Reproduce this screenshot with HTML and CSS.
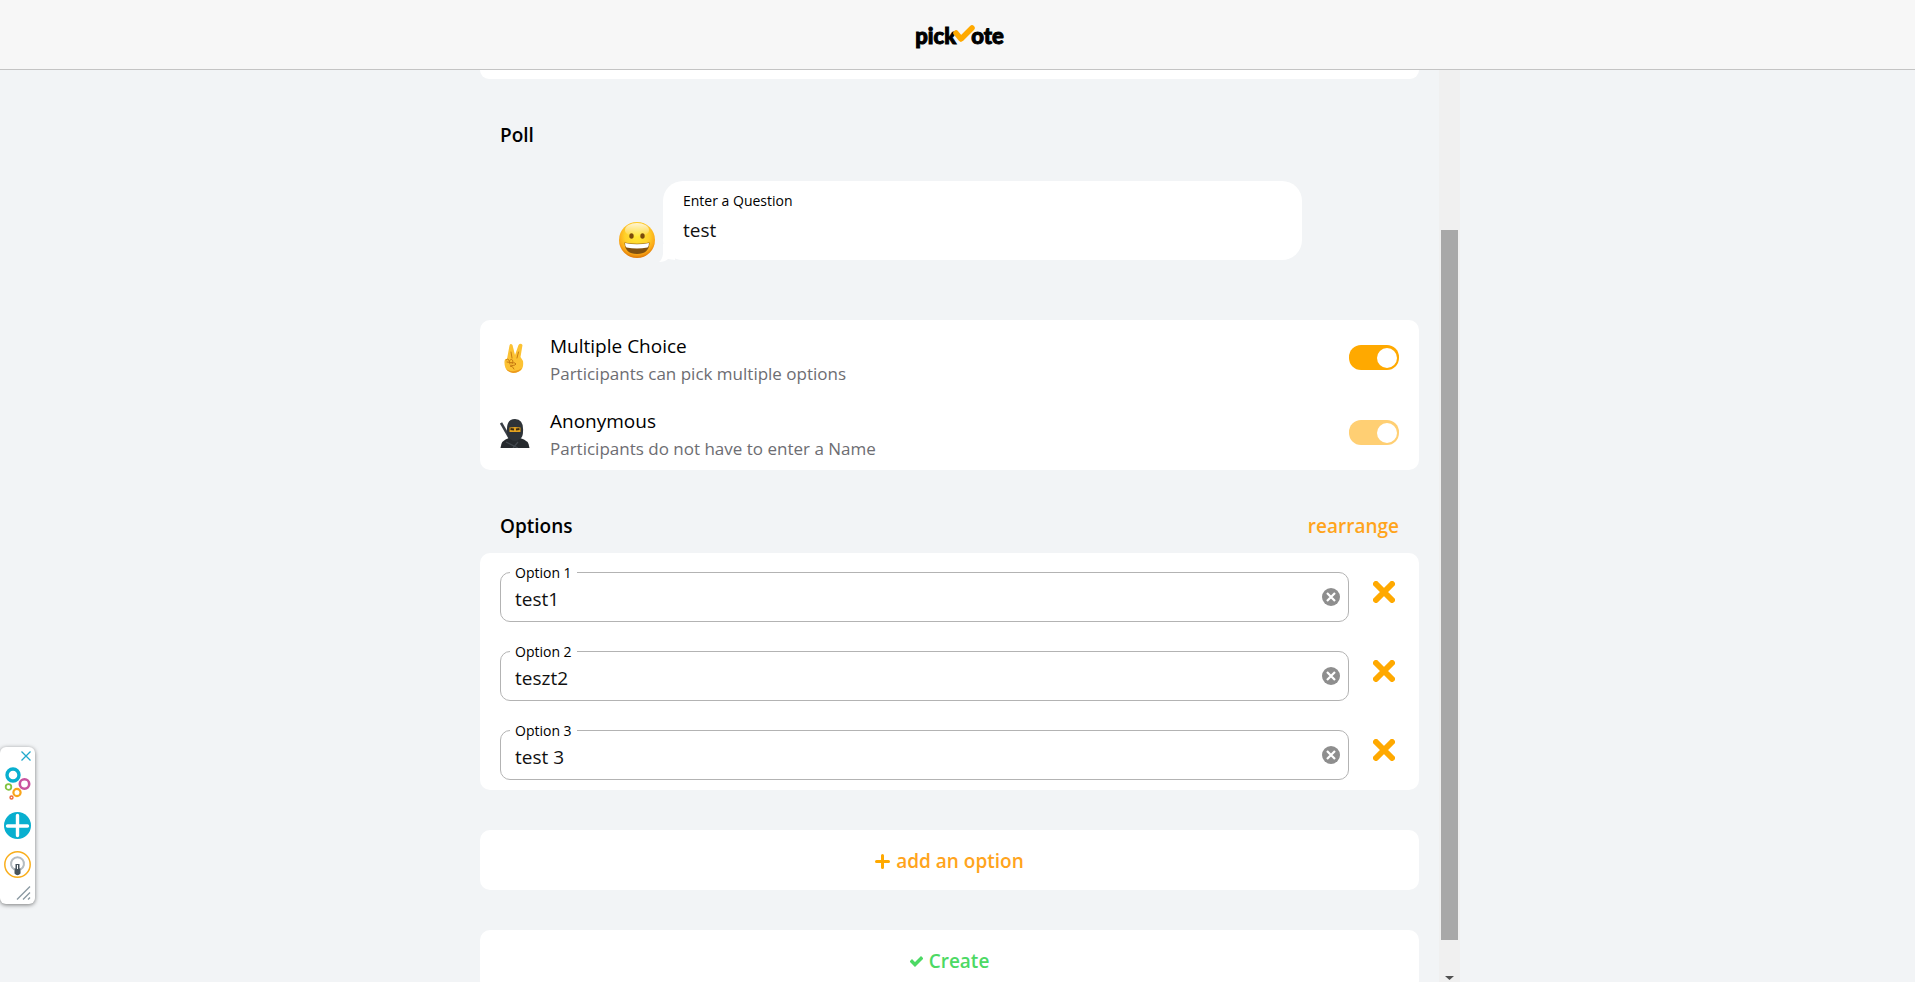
FILE: index.html
```html
<!DOCTYPE html>
<html lang="en">
<head>
    <meta charset="UTF-8">
    <meta name="viewport" content="width=device-width, initial-scale=1.0">
    <title>pickvote</title>
    <link rel="stylesheet" href="styles.css">
</head>
<body>
    <svg class="defs" width="0" height="0" aria-hidden="true">
        <symbol id="cross" viewBox="0 0 22 22">
            <path d="M3 3L19 19M19 3L3 19" fill="none" stroke="#ffa900" stroke-width="6" stroke-linecap="round"/>
        </symbol>
        <symbol id="clear" viewBox="0 0 18 18">
            <circle cx="9" cy="9" r="9" fill="#8e8e8e"/>
            <path d="M5 5L13 13M13 5L5 13" stroke="#fff" stroke-width="2.2"/>
        </symbol>
    </svg>

    <header>
        <a class="logo" href="#">
            <span>pick</span>
            <svg class="logo-check" width="22" height="18" viewBox="0 0 22 18">
                <path d="M3 8L8 14L19 3" fill="none" stroke="#ffa900" stroke-width="5.5" stroke-linecap="round" stroke-linejoin="round"/>
            </svg>
            <span>ote</span>
        </a>
    </header>

    <main>
        <form class="content">
            <div class="card card-end"></div>

            <h2 class="poll-title">Poll</h2>

            <div class="question">
                <svg width="36" height="36" viewBox="0 0 36 36">
                    <defs>
                        <radialGradient id="face" cx="50%" cy="38%" r="62%">
                            <stop offset="0" stop-color="#ffe935"/>
                            <stop offset="0.55" stop-color="#ffd02a"/>
                            <stop offset="0.82" stop-color="#fba918"/>
                            <stop offset="1" stop-color="#de7605"/>
                        </radialGradient>
                        <linearGradient id="shine" x1="0" y1="0" x2="0" y2="1">
                            <stop offset="0" stop-color="#fff" stop-opacity="0.8"/>
                            <stop offset="1" stop-color="#fff" stop-opacity="0"/>
                        </linearGradient>
                    </defs>
                    <circle cx="18" cy="18" r="18" fill="url(#face)"/>
                    <ellipse cx="18" cy="8" rx="12" ry="7" fill="url(#shine)"/>
                    <ellipse cx="12.5" cy="14" rx="2.2" ry="2.7" fill="#7a4a0c"/>
                    <ellipse cx="23.5" cy="14" rx="2.2" ry="2.7" fill="#7a4a0c"/>
                    <path d="M5.500 20.500Q18 23 30.500 20.500Q30 32 18 32Q6 32 5.500 20.500Z" fill="#80500f"/>
                    <path d="M6 21Q18 23.500 30 21Q30 24.500 28.500 25.500Q18 27.500 7.500 25.500Q6 24.500 6 21Z" fill="#fff"/>
                </svg>
                <div class="bubble">
                    <label for="question">Enter a Question</label>
                    <input type="text" id="question" value="test">
                </div>
            </div>

            <div class="card settings">
                <div class="setting">
                    <svg class="emoji" width="30" height="30" viewBox="0 0 30 30">
                        <path d="M7 16L9.500 2.500Q10.500 0 12.500 2L15 12L18.500 2Q20.500-0.500 22.500 2L20.500 14L23 18Q24 25 20 28Q14 31 8 28Q4 25 4.500 18Q5 15 7 16Z" fill="#fcc233"/>
                        <path d="M12 15L11 9M17 15L18.500 9M6 17Q7 15 9 17L10 21M10 17Q12 15 13 18L12 21M7 19L15 20Q17 21 15 22L10 23Q13 23 14 26" fill="none" stroke="#c87c12" stroke-width="1" stroke-linecap="round"/>
                        <path d="M6 26Q14 31 22 25Q19 30 13 30Q8 29 6 26Z" fill="#ec9a1d"/>
                    </svg>
                    <label for="multiple">
                        <span class="name">Multiple Choice</span>
                        <span class="hint">Participants can pick multiple options</span>
                    </label>
                    <input class="toggle" type="checkbox" id="multiple" checked>
                </div>
                <div class="setting">
                    <svg class="emoji" width="30" height="30" viewBox="0 0 30 30">
                        <path d="M1 5L12 24" stroke="#3a3f46" stroke-width="2.600"/>
                        <path d="M0.500 30Q1 22 9 20H20Q29 22 29.500 30Z" fill="#262a2e"/>
                        <path d="M7 14Q6 1 15 1Q24 1 23 14Q23 19 20 21Q15 25 10 21Q7 19 7 14Z" fill="#2e3338"/>
                        <path d="M9.500 9.500Q15 8.500 20.500 9.500V14H9.500Z" fill="#e3a21f"/>
                        <path d="M10.500 11L14 11.500M16 11.500L19.500 11" stroke="#3b2a10" stroke-width="1.800"/>
                        <path d="M6 24L18 30M18 24L13 30" stroke="#43494f" stroke-width="1.200"/>
                    </svg>
                    <label for="anonymous">
                        <span class="name">Anonymous</span>
                        <span class="hint">Participants do not have to enter a Name</span>
                    </label>
                    <input class="toggle" type="checkbox" id="anonymous" checked disabled>
                </div>
            </div>

            <div class="options-head">
                <h2>Options</h2>
                <button type="button">rearrange</button>
            </div>

            <div class="card options">
                <div class="option">
                    <fieldset>
                        <legend><label for="option1">Option 1</label></legend>
                        <input type="text" id="option1" value="test1">
                        <button type="button" aria-label="Clear"><svg width="18" height="18"><use href="#clear"/></svg></button>
                    </fieldset>
                    <button class="remove" type="button" aria-label="Remove"><svg width="22" height="22"><use href="#cross"/></svg></button>
                </div>
                <div class="option">
                    <fieldset>
                        <legend><label for="option2">Option 2</label></legend>
                        <input type="text" id="option2" value="teszt2">
                        <button type="button" aria-label="Clear"><svg width="18" height="18"><use href="#clear"/></svg></button>
                    </fieldset>
                    <button class="remove" type="button" aria-label="Remove"><svg width="22" height="22"><use href="#cross"/></svg></button>
                </div>
                <div class="option">
                    <fieldset>
                        <legend><label for="option3">Option 3</label></legend>
                        <input type="text" id="option3" value="test 3">
                        <button type="button" aria-label="Clear"><svg width="18" height="18"><use href="#clear"/></svg></button>
                    </fieldset>
                    <button class="remove" type="button" aria-label="Remove"><svg width="22" height="22"><use href="#cross"/></svg></button>
                </div>
            </div>

            <button class="card action" type="button">
                <svg width="15" height="15" viewBox="0 0 15 15">
                    <path d="M7.500 1.500V13.500M1.500 7.500H13.500" stroke="#ffa900" stroke-width="3" stroke-linecap="round"/>
                </svg>
                add an option
            </button>
            <button class="card action create" type="submit">
                <svg width="13" height="11" viewBox="0 0 13 11">
                    <path d="M2 5.500L5 8.500L11 2.500" fill="none" stroke="#4cd964" stroke-width="3.400" stroke-linecap="square"/>
                </svg>
                Create
            </button>
        </form>
        <div class="scrollbar">
            <div class="thumb"></div>
            <svg width="9" height="4" viewBox="0 0 9 4"><path d="M0 0H9L4.500 4Z" fill="#505050"/></svg>
        </div>
    </main>

    <aside class="widget">
        <button class="widget-close" type="button" aria-label="Close">
            <svg width="10" height="10" viewBox="0 0 10 10"><path d="M0.500 0.500L9.500 9.500M9.500 0.500L0.500 9.500" stroke="#1fa9cc" stroke-width="1.300"/></svg>
        </button>
        <svg class="rings" width="27" height="33" viewBox="0 0 27 33" fill="none">
            <circle cx="9" cy="8" r="6" stroke="#08afcf" stroke-width="3.400"/>
            <circle cx="20.500" cy="17" r="4.700" stroke="#c9539f" stroke-width="2.600"/>
            <circle cx="4.500" cy="20" r="2.800" stroke="#82c341" stroke-width="1.800"/>
            <circle cx="13" cy="25.500" r="3.600" stroke="#f9a51a" stroke-width="2.200"/>
            <circle cx="7.500" cy="30.500" r="1.500" stroke="#ef6b3a" stroke-width="1.400"/>
        </svg>
        <svg width="27" height="27" viewBox="0 0 27 27">
            <circle cx="13.500" cy="13.500" r="13.500" fill="#08afcf"/>
            <path d="M13.500 3.500V23.500M3.500 14H23.500" stroke="#fff" stroke-width="3.400" stroke-linecap="round"/>
        </svg>
        <svg class="bulb" width="27" height="27" viewBox="0 0 27 27">
            <circle cx="13.500" cy="13.500" r="12.700" fill="#fff" stroke="#f9ae1c" stroke-width="1.500"/>
            <path d="M10.500 18.500A6.500 6.500 0 1 1 16.500 18.500" fill="none" stroke="#b5bcc1" stroke-width="2"/>
            <path d="M11.500 13H15.500V17.500H16.500V22.500Q13.500 26 10.500 22.500V17.500H11.500Z" fill="#46535c"/>
            <path d="M13.500 14V18" stroke="#fff" stroke-width="1"/>
        </svg>
        <svg class="grip" width="15" height="14" viewBox="0 0 15 14">
            <path d="M1 13.500L14 0.500M7 13.500L14 6.500M12 13.500L14 11.500" stroke="#8b9aa3" stroke-width="1.400"/>
        </svg>
    </aside>
</body>
</html>
```
FILE: styles.css
```css
* {
    box-sizing: border-box;
}
body {
    font-family: "Open Sans", "Noto Sans", sans-serif;
    font-size: 19px;
    line-height: 24px;
    margin: 0;
    height: 100vh;
    display: flex;
    flex-direction: column;
    overflow: hidden;
    background-color: #f2f4f6;
    color: #000;
}
h2 {
    font-size: 19px;
    font-weight: 600;
    margin: 0;
}
button {
    font: inherit;
    padding: 0;
    border: none;
    background: none;
    cursor: pointer;
}
svg {
    display: block;
    flex: none;
}
.defs {
    position: absolute;
}

/* Header */
header {
    flex: none;
    height: 70px;
    padding-top: 2px;
    display: flex;
    align-items: center;
    justify-content: center;
    background-color: #f7f7f7;
    border-bottom: 1px solid #c4c4c4;
}
.logo {
    display: flex;
    align-items: center;
    font-family: Lato, sans-serif;
    font-size: 22px;
    font-weight: 900;
    color: #000;
    text-decoration: none;
    -webkit-text-stroke: 1px #000;
    padding-left: 4px;
}
.logo-check {
    position: relative;
    margin: 0 -4px 4px -3px;
}

/* Page and scrollbar */
main {
    flex: 1;
    min-height: 0;
    display: flex;
    width: 100%;
    max-width: 1005px;
    margin: 0 auto;
    padding-left: 5px;
}
.content {
    flex: 1;
    display: flex;
    flex-direction: column;
    padding: 0 20px;
    overflow: hidden;
}
.content > * {
    flex: none;
}
.scrollbar {
    width: 21px;
    padding: 160px 2px 2px;
    display: flex;
    flex-direction: column;
    align-items: center;
    background-color: #f0f0f0;
}
.thumb {
    flex: 1;
    width: 17px;
    margin-bottom: 36px;
    background-color: #a8a8a8;
}

.card {
    background-color: #fff;
    border-radius: 10px;
}
.card-end {
    height: 9px;
    border-radius: 0 0 10px 10px;
}
.poll-title {
    padding: 44px 20px 34px;
}

/* Question */
.question {
    display: flex;
    align-items: flex-end;
    gap: 8px;
    width: 683px;
    margin: 0 auto;
    position: relative;
    left: 11px;
}
.question > svg {
    margin-bottom: 2px;
}
.bubble {
    flex: 1;
    height: 79px;
    padding: 8px 20px;
    background-color: #fff;
    border-radius: 20px;
    position: relative;
}
.bubble::before {
    content: "";
    position: absolute;
    left: -4px;
    bottom: -2px;
    width: 16px;
    height: 18px;
    background-color: #fff;
    clip-path: path("M4 0V10Q3 16 0 18Q6 18 9 15L16 16V0Z");
}
.bubble label {
    display: block;
    font-size: 14px;
}
input[type="text"] {
    font: inherit;
    color: #111;
    width: 100%;
    padding: 0;
    border: none;
    outline: none;
    background: none;
}
.bubble input {
    display: block;
    height: 34px;
}

/* Settings */
.settings {
    margin-top: 60px;
}
.setting {
    display: flex;
    align-items: center;
    height: 75px;
    padding: 0 20px;
}
.setting label {
    flex: 1;
    margin-left: 20px;
    padding-top: 4px;
}
.setting span {
    display: block;
    line-height: 28px;
}
.setting .hint {
    font-size: 17px;
    color: #6d6d72;
}
.toggle {
    appearance: none;
    width: 50px;
    height: 25px;
    margin: 0;
    padding: 3px 2px;
    display: flex;
    justify-content: flex-end;
    border-radius: 12px;
    background-color: #ffa900;
}
.toggle::before {
    content: "";
    width: 20px;
    height: 20px;
    border-radius: 50%;
    background-color: #fff;
}
.toggle:disabled {
    background-color: #ffcf73;
}

/* Options */
.options-head {
    display: flex;
    justify-content: space-between;
    padding: 44px 20px 15px;
}
.options-head button {
    font-weight: 600;
    color: #ffa41c;
}
.options {
    display: flex;
    flex-direction: column;
    gap: 19px;
    padding: 9px 20px 10px;
}
.option {
    display: flex;
}
fieldset {
    flex: 1;
    height: 60px;
    margin: 0;
    min-width: 0;
    padding: 0 8px 0 9px;
    border: 1px solid #b3b3b3;
    border-radius: 10px;
    position: relative;
}
legend {
    height: 21px;
    padding: 0 5px;
    font-size: 14px;
    line-height: 21px;
}
fieldset input[type="text"] {
    height: 32px;
    padding: 0 30px 0 5px;
    display: block;
}
fieldset button {
    position: absolute;
    right: 8px;
    top: 5px;
}
.remove {
    margin: 19px 4px 19px 24px;
}

/* Actions */
.action {
    display: flex;
    align-items: center;
    justify-content: center;
    gap: 6px;
    height: 60px;
    padding-top: 2px;
    margin-top: 40px;
    font-weight: 600;
    color: #ffa41c;
}
.create {
    color: #4cd964;
}

/* Floating widget */
.widget {
    position: fixed;
    left: 0;
    bottom: 78px;
    width: 35px;
    height: 157px;
    padding: 4px;
    background-color: #fff;
    border-radius: 6px;
    box-shadow: 0 1px 4px rgba(0, 0, 0, 0.5);
    display: flex;
    flex-direction: column;
}
.widget-close,
.grip {
    align-self: flex-end;
}
.rings {
    margin: 6px 0 12px;
}
.bulb {
    margin: 12px 0 8px;
}
```
